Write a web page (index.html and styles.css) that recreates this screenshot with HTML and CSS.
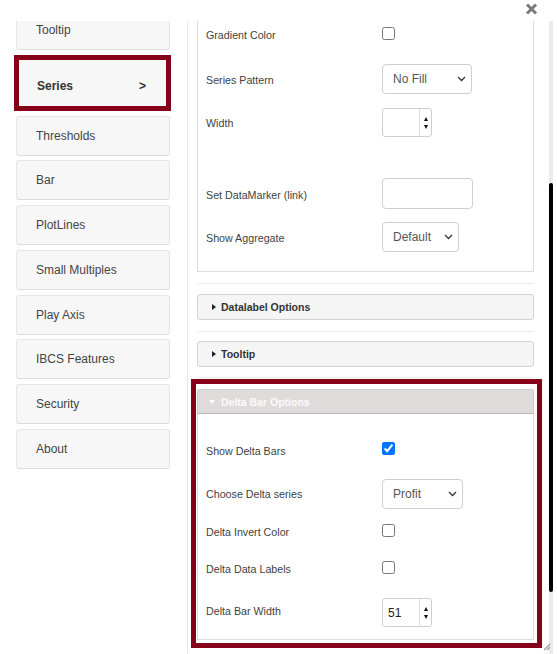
FILE: index.html
```html
<!DOCTYPE html>
<html>
<head>
<meta charset="utf-8">
<link rel="stylesheet" href="styles.css">
</head>
<body>
<div class="dialog">
  <div class="topbar">
    <span class="close"><svg width="13" height="12" viewBox="0 0 13 12"><path d="M2 1.5 L11 10.5 M11 1.5 L2 10.5" stroke="#7b7b7b" stroke-width="3"/></svg></span>
  </div>
  <div class="main">
    <nav class="sidenav">
      <div class="navlist">
        <div class="navbtn">Tooltip</div>
        <div class="navbtn active"><span>Series</span><span>&gt;</span></div>
        <div class="navbtn">Thresholds</div>
        <div class="navbtn">Bar</div>
        <div class="navbtn">PlotLines</div>
        <div class="navbtn">Small Multiples</div>
        <div class="navbtn">Play Axis</div>
        <div class="navbtn">IBCS Features</div>
        <div class="navbtn">Security</div>
        <div class="navbtn">About</div>
      </div>
    </nav>
    <div class="settings">
      <div class="scrollarea">
        <div class="scrollinner">
          <section class="block first">
            <div class="panel">
              <div class="row r-grad"><div class="label lab-cb">Gradient Color</div><input type="checkbox" class="cb"></div>
              <div class="row r-pattern"><div class="label lab-sel">Series Pattern</div>
                <div class="select w90"><span>No Fill</span><svg width="9" height="6" viewBox="0 0 9 6"><path d="M1 1 L4.5 4.5 L8 1" fill="none" stroke="#333" stroke-width="1.3"/></svg></div>
              </div>
              <div class="row r-width"><div class="label">Width</div>
                <div class="spin"><div class="spin-val"></div><div class="spin-btns"><i class="up"></i><i class="down"></i></div></div>
              </div>
              <div class="row r-marker"><div class="label lab-marker">Set DataMarker (link)</div><div class="textbox"></div></div>
              <div class="row r-agg"><div class="label lab-sel">Show Aggregate</div>
                <div class="select w77"><span>Default</span><svg width="9" height="6" viewBox="0 0 9 6"><path d="M1 1 L4.5 4.5 L8 1" fill="none" stroke="#333" stroke-width="1.3"/></svg></div>
              </div>
            </div>
          </section>
          <section class="block second">
            <div class="acc-head"><i class="tri-right"></i>Datalabel Options</div>
          </section>
          <section class="block third">
            <div class="acc-head"><i class="tri-right"></i>Tooltip</div>
          </section>
          <div class="highlight">
            <div class="acc-head open"><i class="tri-down"></i>Delta Bar Options</div>
            <div class="acc-body">
              <div class="row d1"><div class="label lab-d1">Show Delta Bars</div><input type="checkbox" class="cb" checked></div>
              <div class="row d2"><div class="label">Choose Delta series</div>
                <div class="select w81"><span>Profit</span><svg width="9" height="6" viewBox="0 0 9 6"><path d="M1 1 L4.5 4.5 L8 1" fill="none" stroke="#333" stroke-width="1.3"/></svg></div>
              </div>
              <div class="row d3"><div class="label lab-cb">Delta Invert Color</div><input type="checkbox" class="cb"></div>
              <div class="row d4"><div class="label lab-cb">Delta Data Labels</div><input type="checkbox" class="cb"></div>
              <div class="row d5"><div class="label lab-d5">Delta Bar Width</div>
                <div class="spin"><div class="spin-val">51</div><div class="spin-btns"><i class="up"></i><i class="down"></i></div></div>
              </div>
            </div>
          </div>
        </div>
      </div>
      <div class="scrollbar"><div class="thumb"></div></div>
      <svg class="grip" width="9" height="9" viewBox="0 0 9 9"><path d="M8 2 L2 8 M8 5 L5 8" stroke="#9a9a9a" stroke-width="1.2"/></svg>
    </div>
  </div>
</div>
</body>
</html>
```
FILE: styles.css
```css
* { box-sizing: border-box; }
html, body { margin: 0; padding: 0; background: #fff; }
body { font-family: "Liberation Sans", Arial, sans-serif; color: #444; }

.dialog { width: 557px; height: 654px; overflow: hidden; }

.topbar {
  height: 21px;
  display: flex;
  justify-content: flex-end;
  align-items: flex-start;
  padding: 3px 19px 0 0;
}
.close { display: block; width: 13px; height: 12px; }
.close svg { display: block; }

.main { display: flex; height: 633px; }

.sidenav { width: 187px; flex: none; overflow: hidden; padding-left: 16px; }
.navlist { margin-top: -11px; display: flex; flex-direction: column; gap: 4.75px; }
.navbtn {
  width: 154px;
  height: 40px;
  flex: none;
  display: flex;
  align-items: center;
  padding-left: 19px;
  background: #f7f7f7;
  border: 1px solid #e6e6e6;
  border-bottom-color: #dcdcdc;
  border-radius: 3px;
  font-size: 12px;
  color: #444;
}
.navbtn.active {
  width: 157px;
  height: 56px;
  margin-left: -2px;
  border: 5px solid #87001a;
  border-radius: 0;
  padding: 7px 20px 0 18px;
  justify-content: space-between;
  font-weight: bold;
  color: #333;
}

.settings {
  position: relative;
  width: 366px;
  flex: none;
  display: flex;
  border-left: 1px solid #e8e8e8;
}
.scrollarea { flex: 1; overflow: hidden; padding-left: 9px; }
.scrollinner { width: 337px; margin-top: -10px; }

.scrollbar { width: 4px; flex: none; background: #ebebeb; }
.thumb { margin-top: 162px; height: 409px; background: #000; border-radius: 2px; }
.grip { position: absolute; right: 2px; bottom: 3px; }

.panel {
  border: 1px solid #ddd;
  padding: 11px 0 19px 8px;
  background: #fff;
}
.block { border-bottom: 1px solid #ebebeb; }
.block.first { padding-bottom: 11px; }
.block.second { padding: 10px 0 11px; }
.block.third { padding: 9px 0 10px; }

.row { display: flex; align-items: center; }
.label { width: 176px; flex: none; font-size: 10.7px; line-height: 14px; color: #3f3f3f; }
.lab-cb { padding-top: 4px; }
.lab-sel { padding-top: 2px; }
.lab-marker { padding-top: 3px; }
.lab-d1 { padding-top: 6px; }
.lab-d5 { padding-bottom: 3px; }

.r-grad { height: 20px; }
.r-pattern { height: 30px; margin-top: 21px; }
.r-width { height: 29px; margin-top: 14px; }
.r-marker { height: 31px; margin-top: 41px; }
.r-agg { height: 30px; margin-top: 13px; }

.cb { width: 13px; height: 13px; margin: 0; accent-color: #0075ff; }

.select {
  height: 30px;
  display: flex;
  align-items: center;
  justify-content: space-between;
  border: 1px solid #cfcfcf;
  border-radius: 4px;
  padding: 0 5px 0 10px;
  font-size: 12px;
  color: #555;
  background: #fff;
}
.select svg { display: block; }
.w90 { width: 90px; }
.w77 { width: 77px; }
.w81 { width: 81px; }

.textbox { width: 91px; height: 31px; border: 1px solid #cfcfcf; border-radius: 4px; background: #fff; }

.spin {
  width: 50px;
  height: 29px;
  display: flex;
  border: 1px solid #cfcfcf;
  border-radius: 3px;
  background: #fff;
}
.spin-val { width: 36px; flex: none; display: flex; align-items: center; padding-left: 5px; font-size: 12px; color: #222; }
.spin-btns {
  flex: 1;
  border-left: 1px solid #ddd;
  display: flex;
  flex-direction: column;
  align-items: center;
  justify-content: center;
  gap: 4px;
}
.spin-btns i { display: block; width: 0; height: 0; border-left: 2.5px solid transparent; border-right: 2.5px solid transparent; }
.spin-btns .up { border-bottom: 4px solid #111; }
.spin-btns .down { border-top: 4px solid #111; }

.acc-head {
  height: 26px;
  display: flex;
  align-items: center;
  padding-left: 14px;
  background: #f5f5f5;
  border: 1px solid #d2d2d2;
  border-radius: 3px;
  font-size: 10.5px;
  font-weight: bold;
  color: #333;
}
.tri-right {
  display: block;
  width: 0; height: 0;
  border-left: 4px solid #222;
  border-top: 3.5px solid transparent;
  border-bottom: 3.5px solid transparent;
  margin-right: 5px;
}
.tri-down {
  display: block;
  width: 0; height: 0;
  border-top: 4px solid #fff;
  border-left: 3.5px solid transparent;
  border-right: 3.5px solid transparent;
  margin-right: 6px;
  margin-left: -3px;
}

.highlight {
  margin: 1px -8px 0 -6px;
  border: 5px solid #87001a;
  padding: 5px 3px 3px 1px;
  background: #fff;
}
.acc-head.open {
  height: 25px;
  background: #e0dbdb;
  color: #fafafa;
  border-color: #cfcaca;
  border-bottom-color: #bdb8b8;
  border-radius: 3px 3px 0 0;
}
.acc-body {
  border: 1px solid #ddd;
  border-top: none;
  padding: 24px 0 12px 8px;
}
.d1 { height: 20px; }
.d2 { height: 30px; margin-top: 21px; }
.d3 { height: 20px; margin-top: 11px; }
.d4 { height: 20px; margin-top: 17px; }
.d5 { height: 29px; margin-top: 21px; }
```
